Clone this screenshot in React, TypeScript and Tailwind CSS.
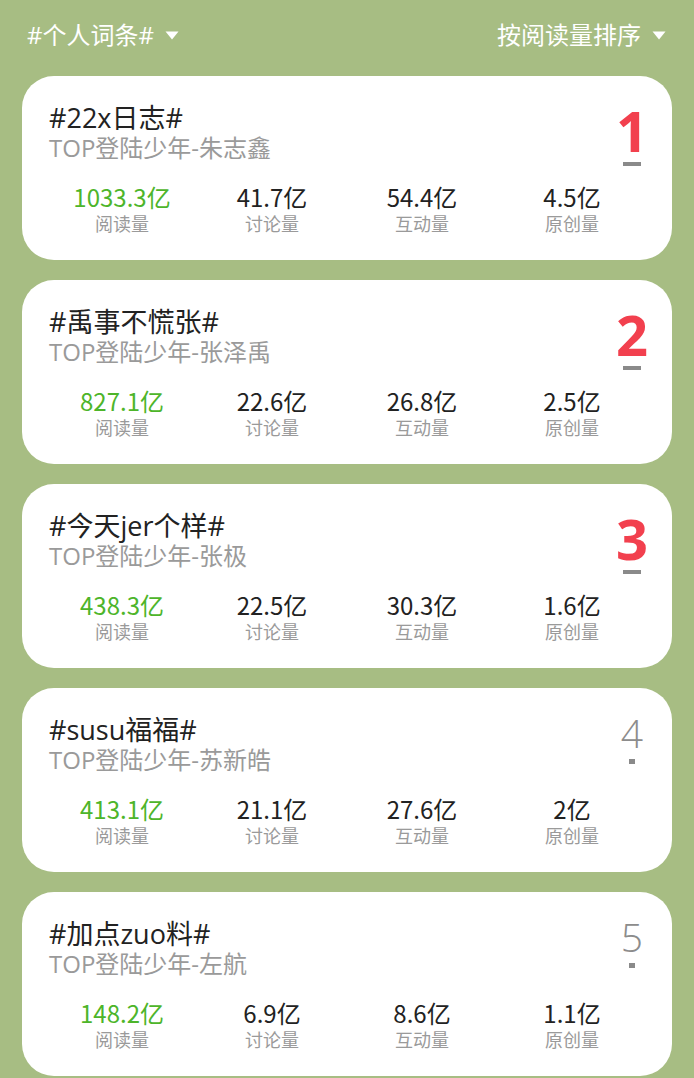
const items = [
  { title: '#22x日志#', sub: 'TOP登陆少年-朱志鑫', stats: ['1033.3亿', '41.7亿', '54.4亿', '4.5亿'] },
  { title: '#禹事不慌张#', sub: 'TOP登陆少年-张泽禹', stats: ['827.1亿', '22.6亿', '26.8亿', '2.5亿'] },
  { title: '#今天jer个样#', sub: 'TOP登陆少年-张极', stats: ['438.3亿', '22.5亿', '30.3亿', '1.6亿'] },
  { title: '#susu福福#', sub: 'TOP登陆少年-苏新皓', stats: ['413.1亿', '21.1亿', '27.6亿', '2亿'] },
  { title: '#加点zuo料#', sub: 'TOP登陆少年-左航', stats: ['148.2亿', '6.9亿', '8.6亿', '1.1亿'] },
];

const labels = ['阅读量', '讨论量', '互动量', '原创量'];

function Caret() {
  return (
    <svg width="14" height="9" viewBox="0 0 14 9" className="ml-[11px]">
      <path d="M0.5 0.5 L13.5 0.5 L7 8.5 Z" fill="#ffffff" />
    </svg>
  );
}

function Rank({ n }: { n: number }) {
  const top = n <= 3;
  return (
    <div className="flex w-[30px] flex-col items-center">
      {top ? (
        <span className="text-[56px] font-bold leading-[56px] text-[#f2404e]">{n}</span>
      ) : (
        <span className="text-[39px] font-light leading-[42px] text-[#8c8c8c]">{n}</span>
      )}
      {top ? (
        <span className="mt-[4px] h-[4px] w-[18px] bg-[#8a8a8a]" />
      ) : (
        <span className="mt-[5px] h-[5px] w-[6px] bg-[#8a8a8a]" />
      )}
    </div>
  );
}

export default function App() {
  return (
    <div
      className="min-h-[1078px] w-full bg-[#a7bd83] px-[22px]"
      style={{ fontFamily: '"Open Sans", "Noto Sans CJK SC", sans-serif' }}
    >
      <div className="flex h-[76px] items-center justify-between pb-[6px] pl-[5px] pr-[6px] text-[24px] text-white">
        <div className="flex items-center">
          #个人词条#
          <Caret />
        </div>
        <div className="flex items-center">
          按阅读量排序
          <Caret />
        </div>
      </div>

      <div className="flex flex-col gap-[20px]">
        {items.map((it, i) => (
          <div key={i} className="h-[184px] rounded-[32px] bg-white px-[25px] pt-[26px]">
            <div className="flex h-[81px] items-start justify-between pl-[2px]">
              <div className="flex flex-col">
                <span className="text-[27px] leading-[32px] text-[#222222]">{it.title}</span>
                <span className="text-[24px] leading-[28px] text-[#9a9a9a]">{it.sub}</span>
              </div>
              <div className={i < 3 ? 'mt-0' : 'mt-[-2px]'}>
                <Rank n={i + 1} />
              </div>
            </div>
            <div
              className="grid grid-cols-4"
              style={{ fontFamily: '"Noto Sans CJK SC", sans-serif' }}
            >
              {it.stats.map((s, j) => (
                <div key={j} className="flex flex-col items-center">
                  <span
                    className={`text-[24px] leading-[28px] ${j === 0 ? 'text-[#4db52a]' : 'text-[#222222]'}`}
                  >
                    {s}
                  </span>
                  <span className="text-[18px] leading-[24px] text-[#9a9a9a]">{labels[j]}</span>
                </div>
              ))}
            </div>
          </div>
        ))}
      </div>
    </div>
  );
}
